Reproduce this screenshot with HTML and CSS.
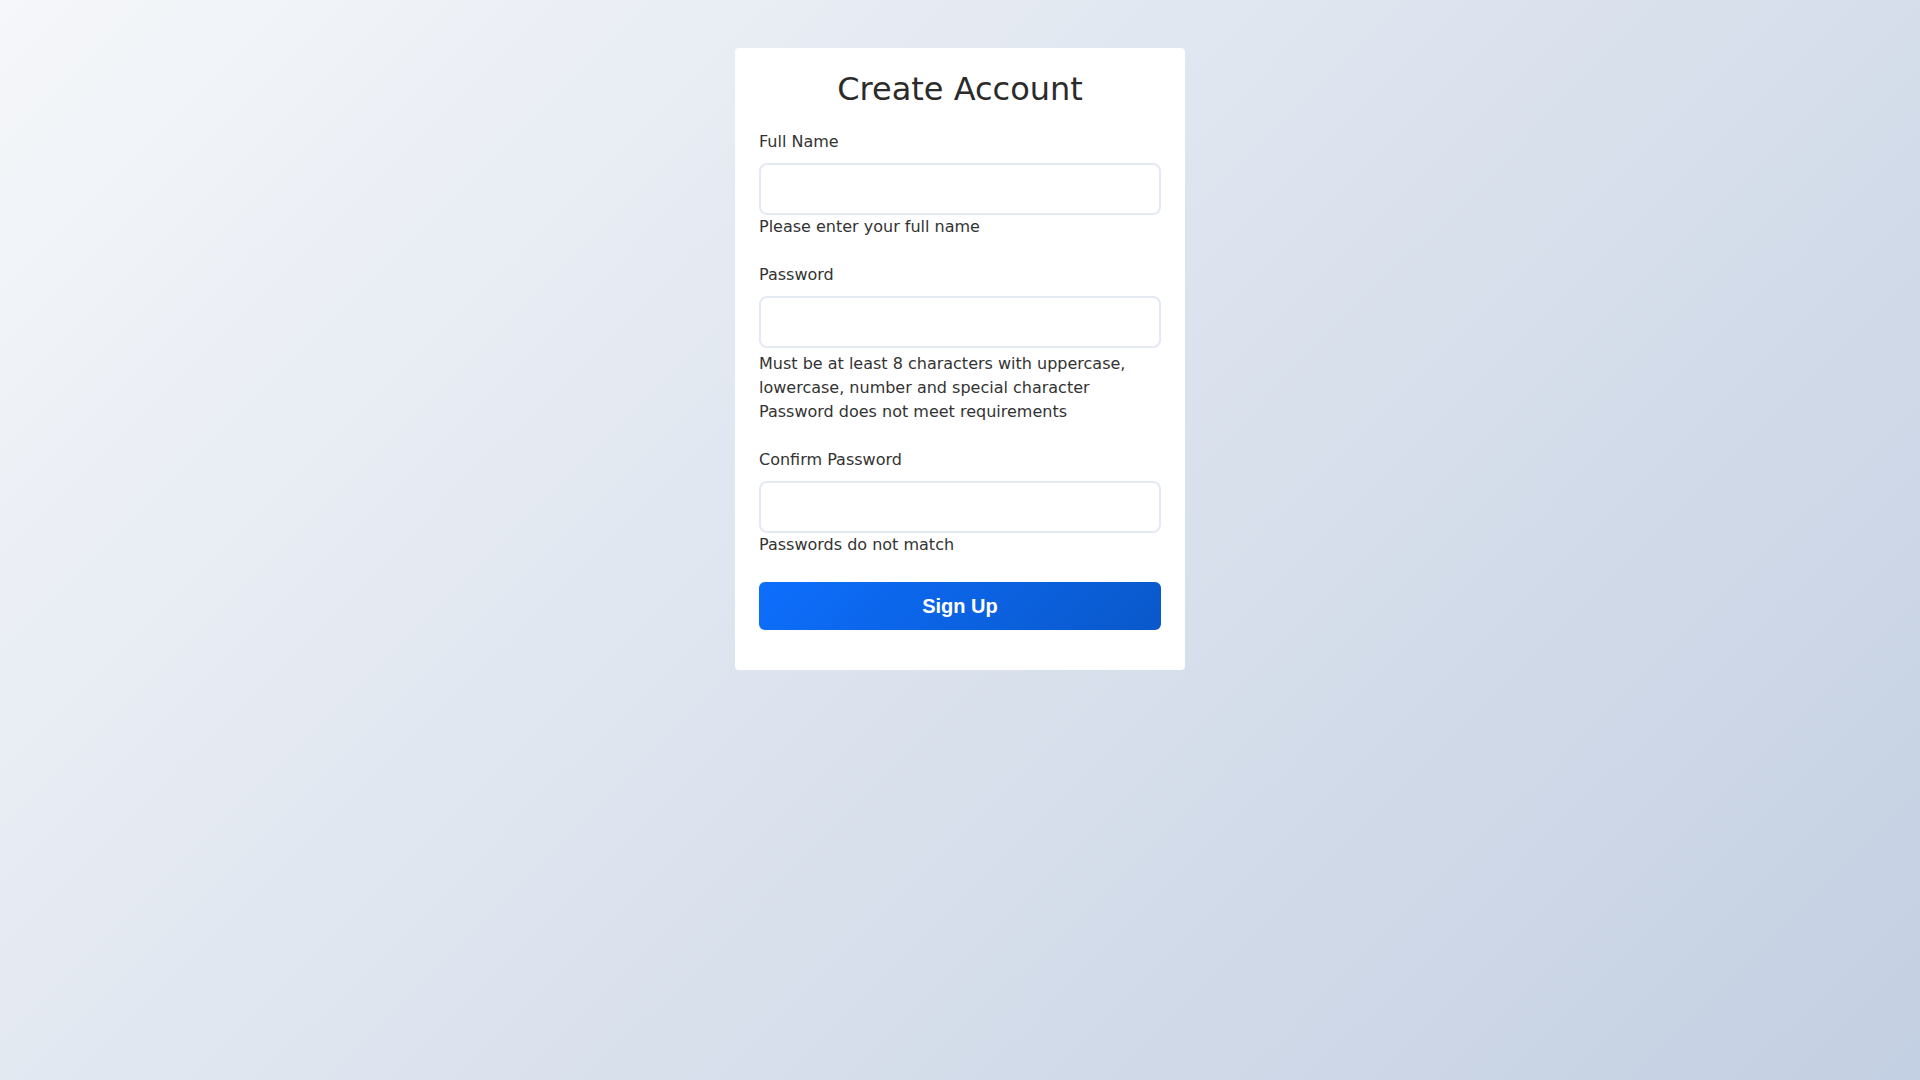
FILE: index.html
```html
<!DOCTYPE html>
<html lang="en">
<head>
<meta charset="utf-8">
<title>Create Account</title>
<link rel="stylesheet" href="styles.css">
</head>
<body>
<main class="page">
  <form class="card" novalidate>
    <h1 class="title">Create Account</h1>
    <div class="field">
      <label class="label" for="fullname">Full Name</label>
      <input class="input" id="fullname" type="text">
      <div class="error">Please enter your full name</div>
    </div>
    <div class="field">
      <label class="label" for="password">Password</label>
      <input class="input" id="password" type="password">
      <div class="hint">Must be at least 8 characters with uppercase, lowercase, number and special character</div>
      <div class="error">Password does not meet requirements</div>
    </div>
    <div class="field">
      <label class="label" for="confirm">Confirm Password</label>
      <input class="input" id="confirm" type="password">
      <div class="error">Passwords do not match</div>
    </div>
    <button class="submit" type="submit">Sign Up</button>
  </form>
</main>
</body>
</html>
```

FILE: styles.css
```css
html, body {
  margin: 0;
  padding: 0;
  height: 100%;
}

body {
  font-family: "DejaVu Sans", sans-serif;
  font-size: 16px;
  line-height: 1.5;
  color: #333;
  background: linear-gradient(135deg, #f5f7fa 0%, #c3cfe2 100%);
  background-attachment: fixed;
}

.page {
  display: flex;
  justify-content: center;
  padding-top: 48px;
}

.card {
  width: 402px;
  background: #fff;
  border-radius: 4px;
  padding: 22px 24px 40px;
  display: flex;
  flex-direction: column;
}

.title {
  margin: 0 0 22px;
  font-size: 32px;
  font-weight: 400;
  line-height: 1.2;
  text-align: center;
  color: #2b2b2b;
}

.field {
  display: flex;
  flex-direction: column;
  margin-bottom: 24px;
}

.label {
  margin-bottom: 9px;
}

.input {
  box-sizing: border-box;
  width: 100%;
  height: 52px;
  border: 2px solid #e4e9f2;
  border-radius: 8px;
  padding: 0 14px;
  font: inherit;
  background: #fff;
  outline: none;
}

.hint {
  margin-top: 4px;
}

.submit {
  margin-top: 1px;
  height: 48px;
  border: none;
  border-radius: 6px;
  background: linear-gradient(135deg, #0d6efd 0%, #0a58ca 100%);
  color: #fff;
  font-family: "Liberation Sans", Arial, sans-serif;
  font-size: 20px;
  font-weight: 700;
  cursor: pointer;
}
```
